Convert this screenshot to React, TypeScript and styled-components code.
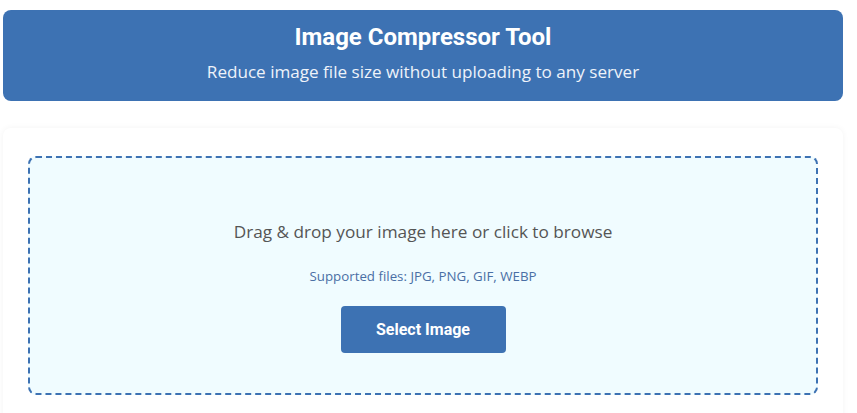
import React from 'react';
import styled, { createGlobalStyle } from 'styled-components';

const GlobalStyle = createGlobalStyle`
  html, body {
    margin: 0;
    padding: 0;
    background: #ffffff;
  }
  body {
    font-family: "Open Sans", "Noto Sans", Arial, sans-serif;
  }
`;

const Page = styled.div`
  display: flex;
  flex-direction: column;
  gap: 27px;
  width: 840px;
  margin: 10px 0 0 3px;
`;

const Header = styled.header`
  background: #3d72b3;
  border-radius: 8px;
  height: 91px;
  box-sizing: border-box;
  padding-top: 12px;
  display: flex;
  flex-direction: column;
  align-items: center;
  color: #ffffff;
`;

const Title = styled.h1`
  margin: 0;
  font-family: Roboto, "Liberation Sans", sans-serif;
  font-weight: 700;
  font-size: 24px;
  line-height: 30px;
`;

const Subtitle = styled.p`
  margin: 8px 0 0;
  font-size: 17.1px;
  line-height: 24px;
  color: #eef3fa;
`;

const Card = styled.section`
  background: #ffffff;
  border-radius: 8px;
  box-shadow: 0 0 6px rgba(0, 0, 0, 0.05);
  padding: 28px 25px;
`;

const DropZone = styled.div`
  border: 2px dashed #3d72b3;
  border-radius: 8px;
  background: #f0fcff;
  padding: 62px 20px 40px;
  display: flex;
  flex-direction: column;
  align-items: center;
`;

const DropText = styled.p`
  margin: 0;
  font-size: 17.2px;
  line-height: 24px;
  color: #555555;
`;

const Hint = styled.p`
  margin: 23px 0 0;
  font-size: 13.3px;
  line-height: 18px;
  color: #4a6fa5;
`;

const SelectButton = styled.button`
  margin-top: 21px;
  width: 165px;
  height: 47px;
  border: none;
  border-radius: 4px;
  background: #3d72b3;
  color: #ffffff;
  font-family: Roboto, "Liberation Sans", sans-serif;
  font-weight: 700;
  font-size: 16px;
  cursor: pointer;
`;

const App = () => {
  return (
    <>
      <GlobalStyle />
      <Page>
        <Header>
          <Title>Image Compressor Tool</Title>
          <Subtitle>Reduce image file size without uploading to any server</Subtitle>
        </Header>
        <Card>
          <DropZone>
            <DropText>Drag &amp; drop your image here or click to browse</DropText>
            <Hint>Supported files: JPG, PNG, GIF, WEBP</Hint>
            <SelectButton>Select Image</SelectButton>
          </DropZone>
        </Card>
      </Page>
    </>
  );
};

export default App;
